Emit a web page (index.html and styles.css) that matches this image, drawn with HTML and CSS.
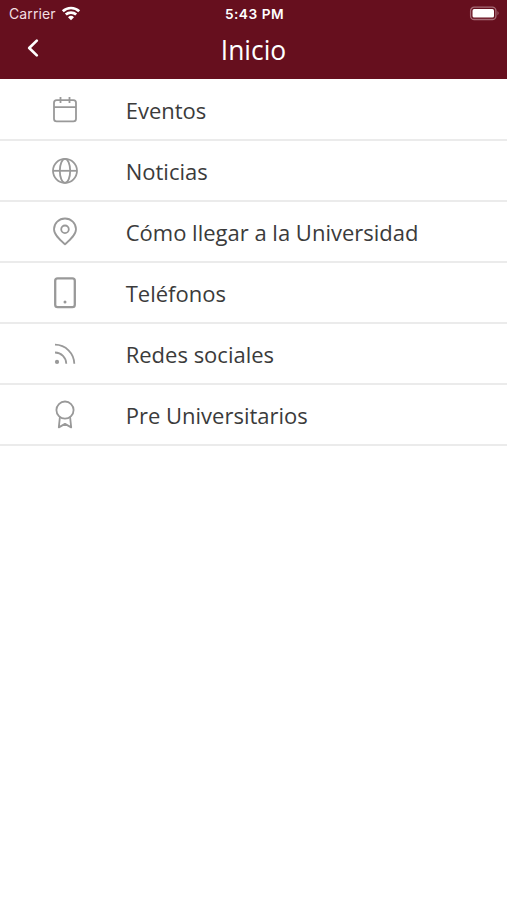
FILE: index.html
```html
<!DOCTYPE html>
<html lang="es">
<head>
<meta charset="utf-8">
<title>Inicio</title>
<link rel="stylesheet" href="styles.css">
</head>
<body>
<header class="header">
  <div class="status">
    <div class="carrier"><span>Carrier</span>
      <svg width="20" height="16" viewBox="0 0 20 16" fill="none" stroke="#fff" stroke-width="2.7"><path d="M1.8 5.3a11.8 11.8 0 0 1 16.4 0M4.8 8.6a7.6 7.6 0 0 1 10.4 0"/><path d="M10 14.2 7 11.3a4.3 4.3 0 0 1 6 0Z" fill="#fff" stroke="none"/></svg>
    </div>
    <span class="time">5:43 PM</span>
    <svg class="battery" width="31" height="16" viewBox="0 0 31 16"><rect x="1.6" y="1.2" width="25.3" height="12.3" rx="3.6" fill="none" stroke="#a66c77" stroke-width="1.3"/><rect x="3.5" y="3.1" width="21.5" height="8.5" rx="1.6" fill="#fff"/><path d="M28.5 5.1q2.2 2.2 0 4.4Z" fill="#a66c77"/></svg>
  </div>
  <nav class="nav">
    <svg class="back" width="14" height="20" viewBox="0 0 14 20" fill="none" stroke="#fff" stroke-width="2.7" stroke-linecap="round" stroke-linejoin="round"><path d="M10.8 2.6 3.2 10l7.6 7.4"/></svg>
    <h1 class="title">Inicio</h1>
  </nav>
</header>
<ul class="menu">
  <li class="row"><svg class="icon" viewBox="0 0 32 32"><rect x="5" y="6.2" width="22" height="21.2" rx="2.6"/><path d="M5 13.2h22M11.5 3v6M20.5 3v6"/></svg><span>Eventos</span></li>
  <li class="row"><svg class="icon" viewBox="0 0 32 32"><circle cx="16" cy="15.8" r="12"/><path d="M4 15.8h24"/><ellipse cx="16" cy="15.8" rx="5.2" ry="12"/></svg><span>Noticias</span></li>
  <li class="row"><svg class="icon" viewBox="0 0 32 32"><path d="M16 28.3C11 23.9 5 18.9 5 13.3a11 10.8 0 0 1 22 0C27 18.9 21 23.9 16 28.3Z"/><circle cx="16" cy="13.3" r="3.8"/></svg><span>Cómo llegar a la Universidad</span></li>
  <li class="row"><svg class="icon bold" viewBox="0 0 32 32"><rect x="6.2" y="1.4" width="19.6" height="28.8" rx="2.4"/><circle class="dot" cx="16" cy="24.9" r="1.5"/></svg><span>Teléfonos</span></li>
  <li class="row"><svg class="icon" viewBox="0 0 32 32"><path d="M6 6.6A19.5 19.5 0 0 1 25.3 25.8M6 14.5A11.3 11.3 0 0 1 17.3 25.8"/><circle class="dot" cx="8" cy="23.9" r="2.1"/></svg><span>Redes sociales</span></li>
  <li class="row"><svg class="icon" viewBox="0 0 32 32"><circle cx="16" cy="11.1" r="8.6"/><path d="M10.9 18.1 9.8 28.4 16 24.9l6.2 3.5-1.1-10.3"/></svg><span>Pre Universitarios</span></li>
</ul>
</body>
</html>
```
FILE: styles.css
```css
* { box-sizing: border-box; }
body { margin: 0; background: #fff; font-family: "Open Sans", sans-serif; color: #3b3b3b; }
.header { height: 79px; background: #660f1e; color: #fff; }
.status { height: 27px; display: grid; grid-template-columns: 1fr auto 1fr; align-items: center; padding: 0 7px 0 9px; font-family: Inter, sans-serif; font-size: 14px; }
.carrier { display: flex; align-items: center; gap: 5px; letter-spacing: 0.1px; color: #f3dfe2; }
.time { font-weight: 600; font-size: 13.7px; letter-spacing: 0.5px; }
.battery { justify-self: end; }
.nav { height: 44px; display: grid; grid-template-columns: 1fr auto 1fr; align-items: center; }
.back { margin-left: 26px; margin-bottom: 2px; }
.title { margin: 0; font-size: 26.4px; font-weight: 400; line-height: 46px; height: 44px; }
.menu { list-style: none; margin: 0; padding: 1px 0 0; }
.row { height: 61px; display: flex; align-items: center; padding: 1px 0 0 49px; border-bottom: 2px solid #ebebeb; font-size: 22px; line-height: 30px; }
.icon { width: 32px; height: 32px; margin-right: 44.7px; fill: none; stroke: #999; stroke-width: 1.8; stroke-linejoin: round; }
.bold { stroke-width: 2.3; }
.icon .dot { fill: #999; stroke: none; }
```
